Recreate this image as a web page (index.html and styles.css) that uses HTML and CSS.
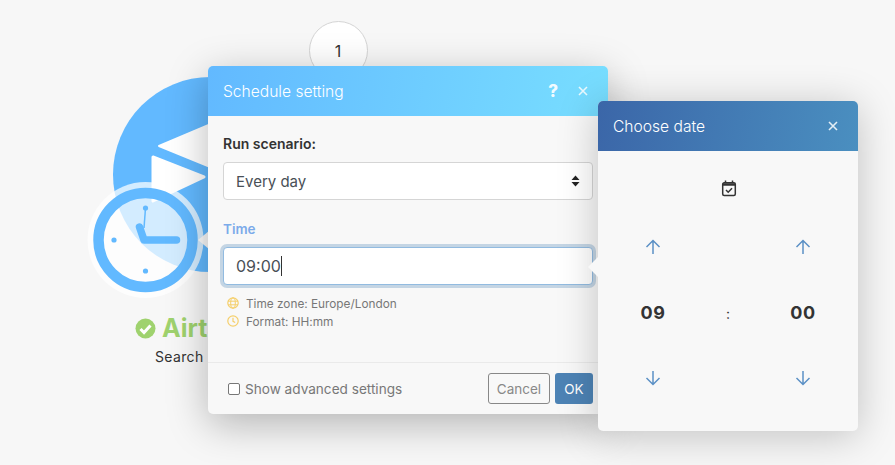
FILE: index.html
```html
<!DOCTYPE html>
<html lang="en">
<head>
    <meta charset="UTF-8">
    <title>Schedule setting</title>
    <link rel="stylesheet" href="styles.css">
</head>
<body>
<div class="canvas">
    <div class="node-count">1</div>

    <!-- module behind the dialogs -->
    <svg class="node" width="160" height="240" viewBox="80 70 160 240">
        <circle cx="210.500" cy="174.500" r="97.500" fill="#62b9ff"/>
        <path d="M159 146 L230 116 L230 175 Z" fill="#fff" stroke="#fff" stroke-width="2" stroke-linejoin="round"/>
        <path d="M153 157 L204 177 L153 201 Z" fill="#fff" stroke="#fff" stroke-width="3" stroke-linejoin="round"/>
        <path d="M198 240 L215 226 L215 254 Z" fill="#f8f8f8"/>
        <circle cx="145.500" cy="240" r="58" fill="#fff" fill-opacity=".72"/>
        <circle cx="145.500" cy="240" r="47" fill="none" stroke="#62b9ff" stroke-width="10.500"/>
        <path d="M139.500 227 L144 240 H176.500" fill="none" stroke="#62b9ff" stroke-width="7.500" stroke-linecap="round" stroke-linejoin="round"/>
        <path d="M145.500 208 L144 228" fill="none" stroke="#62b9ff" stroke-width="1.500"/>
        <circle cx="145.500" cy="208" r="2.600" fill="#62b9ff"/>
        <circle cx="114" cy="240" r="2.600" fill="#62b9ff"/>
        <circle cx="145.500" cy="271" r="2.600" fill="#62b9ff"/>
    </svg>

    <div class="node-title">
        <svg width="21" height="21" viewBox="0 0 21 21">
            <circle cx="10.500" cy="10.500" r="10" fill="#9fd26e"/>
            <path d="M5.500 11 L9 14.500 L15.500 7.500" fill="none" stroke="#fff" stroke-width="3"/>
        </svg>
        <span>Airta</span>
    </div>
    <div class="node-sub">Search</div>

    <!-- schedule dialog -->
    <div class="modal">
        <div class="modal-head">
            <span class="modal-title">Schedule setting</span>
            <span class="help">?</span>
            <svg class="close" width="10" height="10" viewBox="0 0 10 10">
                <path d="M1 1 L9 9 M9 1 L1 9" stroke="#fff" stroke-opacity=".85" stroke-width="1.600"/>
            </svg>
        </div>
        <div class="modal-body">
            <div class="label">Run scenario:</div>
            <div class="field select">
                <span>Every day</span>
                <svg width="9" height="12" viewBox="0 0 9 12">
                    <path d="M4.500 0.500 L8.500 5 H0.500 Z M4.500 11.500 L8.500 7 H0.500 Z" fill="#222"/>
                </svg>
            </div>
            <div class="label time-label">Time</div>
            <div class="field focused"><span>09:00</span><i class="caret"></i></div>
            <div class="hints">
                <div class="hint">
                    <svg width="12" height="12" viewBox="0 0 12 12" fill="none" stroke="#f5cf6b">
                        <circle cx="6" cy="6" r="5.200" stroke-width="1.200"/>
                        <ellipse cx="6" cy="6" rx="2.300" ry="5.200"/>
                        <path d="M1 4.200 H11 M1 7.800 H11"/>
                    </svg>
                    <span>Time zone: Europe/London</span>
                </div>
                <div class="hint">
                    <svg width="12" height="12" viewBox="0 0 12 12" fill="none" stroke="#f5cf6b" stroke-width="1.200">
                        <circle cx="6" cy="6" r="5.200"/>
                        <path d="M6 2.800 V6.300 L8.200 7.500"/>
                    </svg>
                    <span>Format: HH:mm</span>
                </div>
            </div>
        </div>
        <div class="modal-foot">
            <label class="advanced"><i class="check"></i>Show advanced settings</label>
            <button class="btn btn-cancel">Cancel</button>
            <button class="btn btn-ok">OK</button>
        </div>
    </div>

    <!-- time picker popover -->
    <div class="picker">
        <i class="picker-arrow"></i>
        <div class="modal-head picker-head">
            <span class="modal-title">Choose date</span>
            <svg class="close" width="10" height="10" viewBox="0 0 10 10">
                <path d="M1 1 L9 9 M9 1 L1 9" stroke="#fff" stroke-opacity=".85" stroke-width="1.600"/>
            </svg>
        </div>
        <div class="picker-cal">
            <svg width="16" height="17" viewBox="0 0 16 17" fill="none" stroke="#333">
                <rect x="1.700" y="2.800" width="12.600" height="12.800" rx="1.500" stroke-width="1.500"/>
                <path d="M1.700 4.500 H14.300" stroke-width="2.500"/>
                <path d="M4.500 0.500 V3 M11.500 0.500 V3" stroke-width="1.500"/>
                <path d="M5 10 L7.200 12.200 L11 8.200" stroke-width="1.500"/>
            </svg>
        </div>
        <div class="picker-grid">
            <svg class="arrow" width="16" height="16" viewBox="0 0 16 16"><path d="M8 15 V2 M1.500 8 L8 1.500 L14.500 8"/></svg>
            <span></span>
            <svg class="arrow" width="16" height="16" viewBox="0 0 16 16"><path d="M8 15 V2 M1.500 8 L8 1.500 L14.500 8"/></svg>
            <span class="num">09</span>
            <span class="colon">:</span>
            <span class="num">00</span>
            <svg class="arrow" width="16" height="16" viewBox="0 0 16 16"><path d="M8 1 V14 M1.500 8 L8 14.500 L14.500 8"/></svg>
            <span></span>
            <svg class="arrow" width="16" height="16" viewBox="0 0 16 16"><path d="M8 1 V14 M1.500 8 L8 14.500 L14.500 8"/></svg>
        </div>
    </div>
</div>
</body>
</html>
```

FILE: styles.css
```css
* {
    box-sizing: border-box;
}

body {
    margin: 0;
    font-family: Inter, "Liberation Sans", sans-serif;
    color: #333;
}

.canvas {
    width: 895px;
    height: 465px;
    position: relative;
    overflow: hidden;
    background-color: #f7f7f7;
}

/* scenario module */
.node {
    position: absolute;
    left: 80px;
    top: 70px;
}

.node-count {
    width: 59px;
    height: 59px;
    position: absolute;
    left: 308.500px;
    top: 21px;
    border: 1px solid #d5d5d5;
    border-radius: 50%;
    background-color: #fff;
    font-size: 16px;
    line-height: 59px;
    text-align: center;
}

.node-title {
    height: 30px;
    position: absolute;
    left: 135px;
    top: 313px;
    display: flex;
    align-items: center;
    gap: 6px;
    color: #9fd26e;
    font-size: 25px;
    font-weight: 700;
    white-space: nowrap;
}

.node-sub {
    position: absolute;
    left: 155px;
    top: 348px;
    font-size: 14px;
    letter-spacing: .35px;
    line-height: 18px;
    white-space: nowrap;
}

/* dialogs */
.modal {
    width: 400px;
    height: 348px;
    position: absolute;
    left: 208px;
    top: 66px;
    display: flex;
    flex-direction: column;
    border-radius: 5px;
    background-color: #f8f8f8;
    box-shadow: 0 10px 40px rgba(0, 0, 0, .28);
}

.modal-head {
    height: 50px;
    flex-shrink: 0;
    padding: 0 20px 0 15px;
    display: flex;
    align-items: center;
    border-radius: 5px 5px 0 0;
    background: linear-gradient(100deg, #62b9ff, #78deff);
    color: #fff;
}

.modal-title {
    flex-grow: 1;
    font-size: 15.600px;
    font-weight: 300;
}

.help {
    margin-right: 20px;
    font-size: 17px;
    font-weight: 800;
    opacity: .9;
}

.modal-body {
    padding: 15px 15px 0;
}

.label {
    height: 26px;
    margin-bottom: 5px;
    font-size: 14px;
    font-weight: 600;
    line-height: 26px;
}

.time-label {
    height: 18px;
    margin: 20px 0 9px;
    color: #7cabea;
    font-size: 13.500px;
    line-height: 18px;
}

.field {
    height: 38px;
    padding: 0 12px;
    display: flex;
    align-items: center;
    border: 1px solid #d5d5d5;
    border-radius: 4px;
    background-color: #fff;
    color: #495057;
    font-size: 15px;
}

.select {
    justify-content: space-between;
    padding-right: 12px;
}

.focused {
    border-color: #92bbe0;
    box-shadow: 0 0 0 3px rgba(77, 131, 181, .3);
    font-size: 16px;
}

.caret {
    width: 1px;
    height: 20px;
    background-color: #333;
}

.hints {
    margin-top: 10px;
}

.hint {
    height: 18px;
    padding-left: 4px;
    display: flex;
    align-items: center;
    gap: 7px;
    color: #777;
    font-size: 11.800px;
}

.hint svg {
    margin-top: -3px;
}

.modal-foot {
    margin-top: auto;
    height: 52px;
    padding: 10px 15px 0 20px;
    display: flex;
    align-items: flex-start;
    gap: 5px;
    border-top: 1px solid #eaeaea;
}

.advanced {
    height: 31px;
    margin-right: auto;
    display: flex;
    align-items: center;
    gap: 5px;
    color: #777;
    font-size: 13.600px;
}

.check {
    width: 12px;
    height: 12px;
    border: 1px solid #777;
    border-radius: 2px;
    background-color: #fff;
}

.btn {
    height: 31px;
    padding: 0;
    border-radius: 3px;
    font-family: inherit;
    font-size: 13.500px;
}

.btn-cancel {
    width: 62px;
    border: 1px solid #888;
    background-color: transparent;
    color: #888;
}

.btn-ok {
    width: 38px;
    border: none;
    background-color: #4d83b5;
    color: #fff;
}

/* time picker */
.picker {
    width: 260px;
    height: 330px;
    position: absolute;
    left: 598px;
    top: 101px;
    border-radius: 5px;
    background-color: #f8f8f8;
    box-shadow: 0 5px 40px rgba(0, 0, 0, .22);
}

.picker-arrow {
    position: absolute;
    left: -10px;
    top: 156px;
    border-top: 10px solid transparent;
    border-bottom: 10px solid transparent;
    border-right: 10px solid #f8f8f8;
}

.picker-head {
    background: linear-gradient(100deg, #3b66a8, #4a8fc0);
    padding-right: 20px;
}

.picker-cal {
    height: 74px;
    display: flex;
    align-items: center;
    justify-content: center;
    padding-left: 1px;
}

.picker-grid {
    display: grid;
    grid-template-columns: 110px 40px 110px;
    grid-template-rows: 44px 86px 46px;
    align-items: center;
    justify-items: center;
}

.arrow {
    fill: none;
    stroke: #5b90c5;
    stroke-width: 1.500;
}

.num {
    font-size: 18px;
    font-weight: 700;
    letter-spacing: .5px;
}

.colon {
    padding-top: 3px;
    font-size: 14px;
}
```
